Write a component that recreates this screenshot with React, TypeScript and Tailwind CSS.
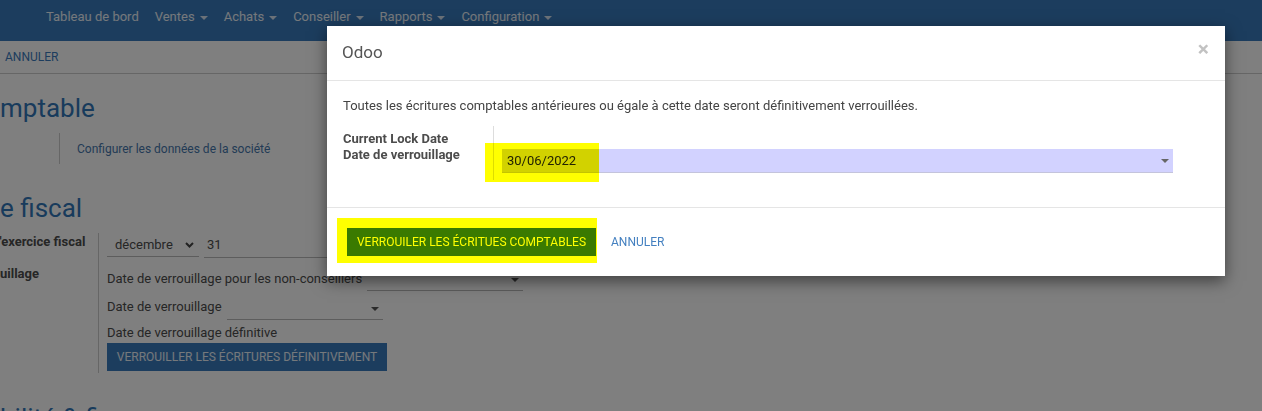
import React from 'react';

const Caret = ({ className = '' }: { className?: string }) => (
  <span className={`inline-block border-x-[4px] border-t-[4px] border-x-transparent ${className}`} />
);

const NavItem = ({ label, caret = true }: { label: string; caret?: boolean }) => (
  <span className="flex items-center px-2 text-[13px] leading-[18px] text-white/90">
    {label}
    {caret && <Caret className="ml-[5px] mt-[1px] border-t-white/80" />}
  </span>
);

const SelectField = ({ width }: { width: string }) => (
  <span className={`ml-[5px] flex h-[22px] items-center justify-end border-b border-[#bbb] pr-[4px] ${width}`}>
    <Caret className="border-t-[#555]" />
  </span>
);

const SettingsPage = () => (
  <div className="flex flex-col text-[13px] text-[#4c4c4c]">
    <nav className="flex h-[41px] items-start bg-[#387abc] pl-[38px] pt-[8px]">
      <NavItem label="Tableau de bord" caret={false} />
      <NavItem label="Ventes" />
      <NavItem label="Achats" />
      <NavItem label="Conseiller" />
      <NavItem label="Rapports" />
      <NavItem label="Configuration" />
    </nav>

    <div className="flex h-[33px] items-center border-b border-[#ccc] pl-[5px] text-[12px] text-[#3a7abc]">
      ANNULER
    </div>

    <h2 className="mt-[17px] whitespace-nowrap text-[26px] leading-[34px] text-[#3176b8]">mptable</h2>
    <div className="mt-[8px] flex h-[31px]">
      <div className="w-[59px]" />
      <div className="flex items-center border-l border-[#ccc] pl-[17px] text-[12px] text-[#4677ac]">
        Configurer les données de la société
      </div>
    </div>

    <h2 className="mt-[27px] whitespace-nowrap text-[26px] leading-[34px] text-[#3176b8]">e fiscal</h2>
    <div className="mt-[8px] flex h-[140px]">
      <div className="flex w-[99px] flex-col overflow-hidden border-r border-[#ccc] font-bold leading-[18px]">
        <span className="-ml-[4px] h-[32px] whitespace-nowrap">l'exercice fiscal</span>
        <span className="whitespace-nowrap">uillage</span>
      </div>
      <div className="flex flex-col pl-[8px]">
        <div className="flex h-[25px] items-start">
          <span className="flex h-[24px] w-[92px] items-center border-b border-[#bbb] pl-[8px]">
            décembre
            <svg className="ml-auto mr-[5px]" width="9" height="6" viewBox="0 0 9 6">
              <polyline points="1,1 4.5,4.5 8,1" fill="none" stroke="#444" strokeWidth="2" />
            </svg>
          </span>
          <span className="ml-[5px] flex h-[25px] w-[220px] items-center border-b border-[#bbb] pl-[3px]">31</span>
        </div>
        <div className="flex h-[33px] items-end">
          <span className="mb-[2px] whitespace-nowrap leading-[20px]">Date de verrouillage pour les non-conseillers</span>
          <SelectField width="w-[156px]" />
        </div>
        <div className="flex h-[29px] items-end">
          <span className="mb-[3px] whitespace-nowrap leading-[20px]">Date de verrouillage</span>
          <SelectField width="w-[156px]" />
        </div>
        <div className="h-[23px] pt-[3px] leading-[20px]">Date de verrouillage définitive</div>
        <button className="flex h-[28px] w-[280px] items-center justify-center bg-[#387abc] text-[12px] text-white/90">
          VERROUILLER LES ÉCRITURES DÉFINITIVEMENT
        </button>
      </div>
    </div>

    <h2 className="mt-[28px] whitespace-nowrap text-[26px] leading-[34px] text-[#3176b8]">bilité &amp; finance</h2>
  </div>
);

const LockDateDialog = () => (
  <div className="absolute left-[327px] top-[26px] isolate w-[898px] bg-white text-[13px] text-[#4c4c4c] shadow-[0_5px_15px_rgba(0,0,0,0.5)]">
    <div className="flex h-[55px] items-center justify-between border-b border-[#e5e5e5] pl-[15px] pr-[16px]">
      <span className="text-[17px] text-[#555]">Odoo</span>
      <span className="mb-[8px] text-[21px] font-bold leading-none text-[#c2c2c2]">×</span>
    </div>

    <div className="px-4 pb-[27px] pt-[15px]">
      <p className="leading-[20px] text-[#444]">
        Toutes les écritures comptables antérieures ou égale à cette date seront définitivement verrouillées.
      </p>
      <div className="mt-[10px] flex flex-col font-bold leading-[18px]">
        <div className="flex h-[19px]">
          <div className="w-[151px] border-r border-[#ddd] pt-[4px]">Current Lock Date</div>
        </div>
        <div className="flex h-[35px]">
          <div className="w-[151px] border-r border-[#ddd] pt-[1px]">Date de verrouillage</div>
          <div className="pl-[8px] pt-[4px] font-normal">
            <div className="flex h-[24px] w-[671px] items-center border-b border-[#c4c4dc] bg-[#d2d2ff] pl-[5px] pr-[4px] text-[#222]">
              30/06/2022
              <Caret className="ml-auto border-t-[#666]" />
            </div>
          </div>
        </div>
      </div>
    </div>

    <div className="flex items-center border-t border-[#e5e5e5] py-[20px] pl-[20px]">
      <button className="flex h-[28px] w-[249px] items-center justify-center bg-[#3a7abc] text-[12px] text-white">
        VERROUILER LES ÉCRITUES COMPTABLES
      </button>
      <span className="ml-[15px] text-[12px] text-[#4480c0]">ANNULER</span>
    </div>

    {/* marker highlights */}
    <div className="pointer-events-none absolute left-[158px] top-[117px] h-[39px] w-[114px] bg-[#ffff00] mix-blend-multiply" />
    <div className="pointer-events-none absolute left-[10px] top-[192px] h-[45px] w-[260px] bg-[#ffff00] mix-blend-multiply" />
  </div>
);

export default function App() {
  return (
    <div className="relative h-[411px] w-full overflow-hidden bg-white font-['Roboto',sans-serif]">
      <SettingsPage />
      <div className="absolute inset-0 bg-black/50" />
      <LockDateDialog />
    </div>
  );
}
